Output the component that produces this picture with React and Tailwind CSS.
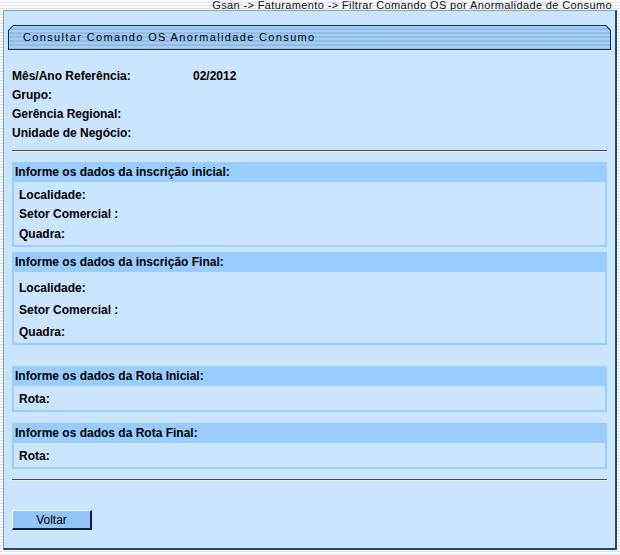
import React from "react";

const font = { fontFamily: '"Liberation Sans", Arial, sans-serif' };

function Section({ title, rows, bodyClass }) {
  return (
    <div className="flex flex-col">
      <div className="h-[20px] bg-[#99ccff] flex items-center pl-[3px] text-[12px] font-bold text-black">
        {title}
      </div>
      <div className={"border-x-2 border-b-2 border-[#99ccff] bg-[#cbe5fe] flex flex-col pl-[5px] " + bodyClass}>
        {rows.map((r, i) => (
          <div key={i} className={"flex items-center text-[12px] font-bold text-black " + r.h}>
            {r.label}
          </div>
        ))}
      </div>
    </div>
  );
}

export default function App() {
  return (
    <div
      className="w-[620px] h-[555px] overflow-hidden bg-[repeating-linear-gradient(to_bottom,#ffffff_0px,#ffffff_2px,#d3e4f4_2px,#d3e4f4_3px)] flex flex-col"
      style={font}
    >
      <div className="h-[10px] flex justify-end items-center pr-[8px] text-[11px] tracking-[0.38px] leading-[10px] text-[#111]">
        Gsan -&gt; Faturamento -&gt; Filtrar Comando OS por Anormalidade de Consumo
      </div>
      <div className="ml-[3px] w-[614px] h-[540px] bg-[#cbe5fe] border-l border-t border-[#7f9fc0] border-r-2 border-b-2 border-r-[#2a4666] border-b-[#2a4666] flex flex-col">
        <div className="mt-[14px] mx-[4px] h-[25px] bg-[#1b2c44] [clip-path:polygon(5px_0,calc(100%-5px)_0,100%_5px,100%_100%,0_100%,0_5px)] p-px">
          <div className="w-full h-full bg-[repeating-linear-gradient(to_bottom,#a6cdf3_0px,#a6cdf3_2px,#8fbceb_2px,#8fbceb_4px)] [clip-path:polygon(4.5px_0,calc(100%-4.5px)_0,100%_4.5px,100%_100%,0_100%,0_4.5px)] flex items-center pl-[14px] text-[11px] tracking-[1.35px] text-black">
            Consultar Comando OS Anormalidade Consumo
          </div>
        </div>

        <div className="px-[8px] mt-[16px] flex flex-col">
          <div className="flex flex-col text-[12px] font-bold text-black">
            <div className="h-[19px] flex items-center">
              <span className="w-[181px]">Mês/Ano Referência:</span>
              <span>02/2012</span>
            </div>
            <div className="h-[19px] flex items-center">Grupo:</div>
            <div className="h-[19px] flex items-center">Gerência Regional:</div>
            <div className="h-[19px] flex items-center">Unidade de Negócio:</div>
          </div>

          <div className="mt-[8px] h-[2px] border-t border-[#4a4a4a] border-b border-b-[#e8eef4]" />

          <div className="mt-[10px]">
            <Section
              title="Informe os dados da inscrição inicial:"
              bodyClass="pt-[3px]"
              rows={[
                { label: "Localidade:", h: "h-[20px]" },
                { label: "Setor Comercial :", h: "h-[18px]" },
                { label: "Quadra:", h: "h-[22px]" },
              ]}
            />
          </div>

          <div className="mt-[5px]">
            <Section
              title="Informe os dados da inscrição Final:"
              bodyClass="pt-[5px]"
              rows={[
                { label: "Localidade:", h: "h-[22px]" },
                { label: "Setor Comercial :", h: "h-[22px]" },
                { label: "Quadra:", h: "h-[22px]" },
              ]}
            />
          </div>

          <div className="mt-[21px]">
            <Section
              title="Informe os dados da Rota Inicial:"
              bodyClass="pt-[2px]"
              rows={[{ label: "Rota:", h: "h-[22px]" }]}
            />
          </div>

          <div className="mt-[11px]">
            <Section
              title="Informe os dados da Rota Final:"
              bodyClass="pt-[2px]"
              rows={[{ label: "Rota:", h: "h-[22px]" }]}
            />
          </div>

          <div className="mt-[10px] h-[2px] border-t border-[#4a4a4a] border-b border-b-[#e8eef4]" />

          <div className="mt-[29px]">
            <button className="w-[80px] h-[20px] bg-[#94c5f8] border-l border-t border-white border-r-2 border-b-2 border-r-[#0c1a5a] border-b-[#0c1a5a] text-[12px] text-black flex items-center justify-center">
              Voltar
            </button>
          </div>
        </div>
      </div>
    </div>
  );
}
